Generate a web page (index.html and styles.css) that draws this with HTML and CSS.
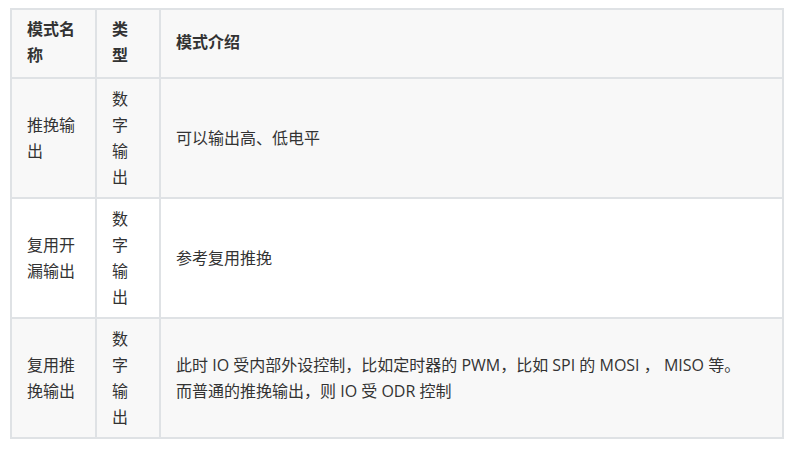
FILE: index.html
```html
<!DOCTYPE html>
<html lang="zh-CN">
<head>
<meta charset="utf-8">
<link rel="stylesheet" href="styles.css">
</head>
<body>
<table class="modes">
  <thead>
    <tr>
      <th class="c-name">模式名称</th>
      <th class="c-type">类型</th>
      <th class="c-desc">模式介绍</th>
    </tr>
  </thead>
  <tbody>
    <tr>
      <td class="c-name">推挽输出</td>
      <td class="c-type">数字输出</td>
      <td class="c-desc">可以输出高、低电平</td>
    </tr>
    <tr>
      <td class="c-name">复用开漏输出</td>
      <td class="c-type">数字输出</td>
      <td class="c-desc">参考复用推挽</td>
    </tr>
    <tr>
      <td class="c-name">复用推挽输出</td>
      <td class="c-type">数字输出</td>
      <td class="c-desc">此时 IO 受内部外设控制，比如定时器的 PWM，比如 SPI 的 MOSI ， MISO 等。<br>而普通的推挽输出，则 IO 受 ODR 控制</td>
    </tr>
  </tbody>
</table>
</body>
</html>
```

FILE: styles.css
```css
html, body {
  margin: 0;
  padding: 0;
  background: #ffffff;
}

body {
  padding: 8px 0 0 10px;
  font-family: "Open Sans", "Noto Sans CJK SC", sans-serif;
  font-size: 16px;
  line-height: 26px;
  color: #333333;
}

.modes {
  box-sizing: border-box;
  width: 774px;
  table-layout: fixed;
  border-collapse: separate;
  border-spacing: 0;
  border-left: 2px solid #dfe2e5;
  border-top: 2px solid #dfe2e5;
}

.modes th,
.modes td {
  box-sizing: border-box;
  padding: 7px 16px 7px 15px;
  border-right: 2px solid #dfe2e5;
  border-bottom: 2px solid #dfe2e5;
  text-align: left;
  vertical-align: middle;
  background: #f8f8f8;
}

.modes th {
  font-weight: 700;
  padding-top: 6px;
  padding-bottom: 9px;
}

.modes tbody tr:nth-child(2n) td {
  background: #ffffff;
}

.c-name { width: 85px; }
.c-type { width: 64px; }
.c-desc { width: 623px; }
```
